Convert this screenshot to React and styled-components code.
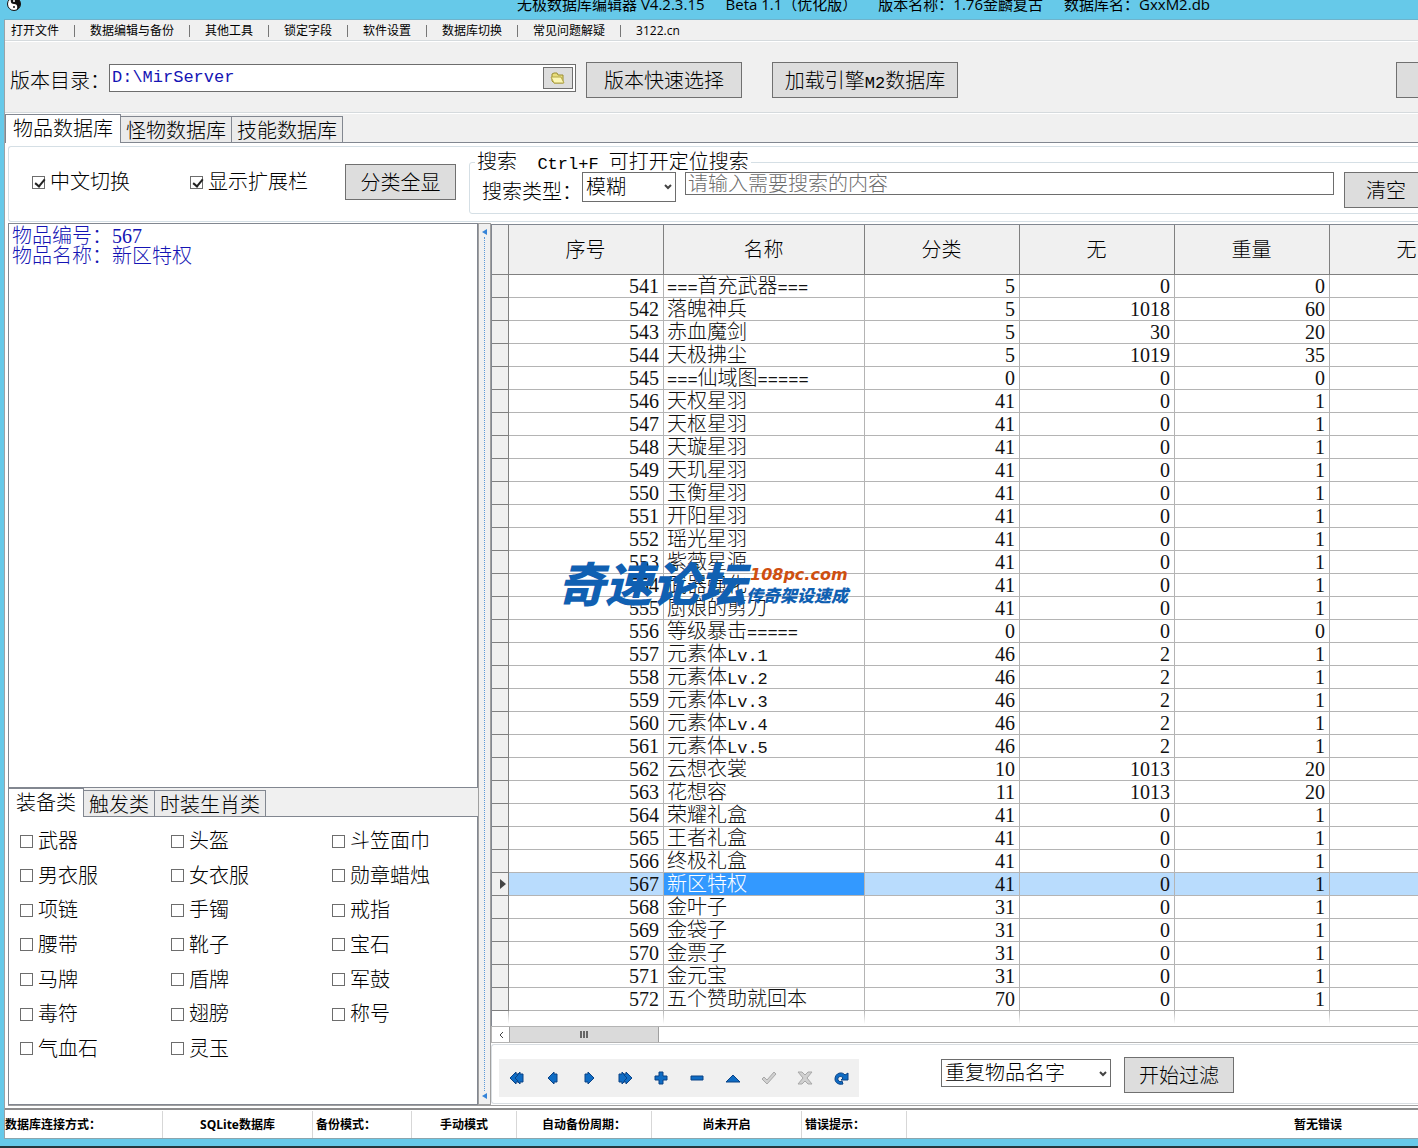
import React, { useState } from "react";
import styled, { createGlobalStyle } from "styled-components";

const GlobalStyle = createGlobalStyle`
  * {
    box-sizing: border-box;
  }

  body {
    margin: 0;
    color: #000;
    font-family: "Liberation Serif", "Noto Sans CJK SC", serif;
    font-size: 20px;
    font-weight: 300;
    line-height: 20px;
  }

  button,
  input,
  select {
    font: inherit;
    color: inherit;
    margin: 0;
  }
`;

const Window = styled.div`
  display: flex;
  flex-direction: column;
  min-height: 100vh;
  padding-left: 4px;
  overflow: hidden;
  background: #66c9e9;
  border-bottom: 2px solid #24373d;
`;

const TitleBar = styled.header`
  display: flex;
  height: 20px;
  padding-left: 3px;
  overflow: hidden;
  border-bottom: 1px solid #6fb3cb;
  font-family: "Open Sans", "Noto Sans CJK SC", sans-serif;
  font-size: 15px;
  font-weight: 400;
  line-height: 8px;
  white-space: nowrap;
  flex-shrink: 0;
`;

const Logo = styled.svg`
  width: 14px;
  height: 14px;
  margin-top: -3px;
  flex-shrink: 0;
`;

const Title = styled.div`
  display: flex;
  gap: 21px;
  margin-left: 496px;
`;

const Client = styled.div`
  display: flex;
  flex-direction: column;
  flex: 1;
  background: #f0f0f0;
  border-left: 1px solid #9aa3a7;
  margin-bottom: 7px;
`;

const MenuBar = styled.nav`
  display: flex;
  align-items: center;
  height: 22px;
  padding-left: 6px;
  border-bottom: 1px solid #fff;
  box-shadow: inset 0 -1px 0 #d5dadd;
  font-family: "Open Sans", "Noto Sans CJK SC", sans-serif;
  font-size: 12px;
  font-weight: 400;
  line-height: 20px;
`;

const MenuLink = styled.a`
  color: #000;
  text-decoration: none;
  white-space: nowrap;

  & + &::before {
    content: "";
    display: inline-block;
    width: 1px;
    height: 12px;
    margin: 0 15px;
    background: #777;
    vertical-align: middle;
  }
`;

const ToolBar = styled.section`
  display: flex;
  align-items: flex-start;
  height: 72px;
  padding: 20px 0 0 5px;
  border-bottom: 1px solid #fff;
  box-shadow: inset 0 -1px 0 #d5dadd;
  white-space: nowrap;
`;

const PathLabel = styled.label`
  padding-top: 9px;
  width: 99px;
`;

const PathBox = styled.div`
  display: flex;
  width: 467px;
  height: 28px;
  margin: 2px 10px 0 0;
  padding: 2px;
  background: #fff;
  border: 1px solid #6d6d6d;
`;

const PathInput = styled.input`
  flex: 1;
  min-width: 0;
  padding: 0;
  border: 0;
  outline: 0;
  color: #1414b4;
  font-family: "Liberation Mono", monospace;
  font-size: 17px;
`;

const Button = styled.button`
  width: ${(props) => props.$width}px;
  height: 36px;
  padding: 2px 0 0;
  border: 1px solid #707070;
  border-radius: 0;
  background: #ddd;
  white-space: nowrap;
  flex-shrink: 0;
`;

const FolderButton = styled(Button)`
  display: flex;
  align-items: center;
  justify-content: center;
  height: 22px;
  padding: 0;
`;

const LoadButton = styled(Button)`
  margin-left: 30px;
`;

const EdgeButton = styled(Button)`
  margin-left: auto;
  margin-right: -88px;
`;

const Tabs = styled.div`
  display: flex;
  align-items: flex-end;
  height: 29px;
  border-bottom: 1px solid #828790;
`;

const Tab = styled.button`
  height: ${(props) => (props.$active ? 29 : 26)}px;
  margin-bottom: ${(props) => (props.$active ? -1 : 0)}px;
  padding: 0 ${(props) => (props.$active ? 7 : 5)}px;
  border: 1px solid #828790;
  border-bottom: 0;
  background: ${(props) => (props.$active ? "#fff" : "#ebebeb")};
  white-space: nowrap;

  & + & {
    margin-left: -1px;
    padding-top: 2px;
  }
`;

const Page = styled.main`
  display: flex;
  flex-direction: column;
  flex: 1;
  padding: 3px 0 0 3px;
  background: #fff;
`;

const FilterBar = styled.section`
  display: flex;
  align-items: flex-start;
  height: 76px;
  padding: 5px 0 0 23px;
  border: 1px solid #d5dfe5;
  border-right: 0;
  border-radius: 3px 0 0 3px;
`;

const CheckLabel = styled.label`
  display: flex;
  align-items: center;
  gap: 5px;
  white-space: nowrap;
`;

const SwitchLabel = styled(CheckLabel)`
  width: ${(props) => props.$width}px;
  margin-top: 20px;
`;

const CheckBox = styled.input.attrs({ type: "checkbox" })`
  appearance: none;
  position: relative;
  width: 13px;
  height: 13px;
  border: 1px solid #6d6d6d;
  background: #fff;
  flex-shrink: 0;

  &:checked::after {
    content: "";
    position: absolute;
    left: 4px;
    top: 0;
    width: 4px;
    height: 8px;
    border: solid #222;
    border-width: 0 2px 2px 0;
    transform: rotate(40deg);
  }
`;

const ShowAllButton = styled(Button)`
  margin-top: 12px;
`;

const SearchBox = styled.fieldset`
  display: flex;
  flex: 1;
  min-width: 0;
  height: 62px;
  margin: 0 -11px 0 13px;
  padding: 0 0 0 12px;
  border: 1px solid #d5dfe5;
  border-radius: 3px;
`;

const SearchLegend = styled.legend`
  margin-left: -7px;
  padding: 0 2px;
  height: 20px;
  white-space: pre;
`;

const SearchRow = styled.div`
  display: flex;
  align-items: flex-start;
  flex: 1;
`;

const SearchLabel = styled.label`
  width: 100px;
  padding-top: 10px;
  white-space: nowrap;
`;

const SelectBox = styled.div`
  position: relative;
  width: ${(props) => props.$width}px;
  flex-shrink: 0;

  svg {
    position: absolute;
    right: 3px;
    top: 11px;
    pointer-events: none;
  }
`;

const Select = styled.select`
  appearance: none;
  width: 100%;
  height: ${(props) => props.$height}px;
  padding: 0 18px 0 3px;
  border: 1px solid #6d6d6d;
  border-radius: 0;
  background: #fff;
`;

const SearchInput = styled.input`
  flex: 1;
  min-width: 0;
  height: 23px;
  margin: 0 10px 0 9px;
  padding: 1px 2px 0;
  border: 1px solid #6d6d6d;

  &::placeholder {
    color: #6d6d6d;
    opacity: 1;
  }
`;

const Work = styled.div`
  display: flex;
  flex: 1;
  margin-top: 1px;
  border-bottom: 1px solid #a0a0a0;
`;

const Side = styled.aside`
  display: flex;
  flex-direction: column;
  width: 470px;
  background: #f0f0f0;
  flex-shrink: 0;
`;

const Memo = styled.div`
  flex: 1;
  padding: 2px 3px;
  border: 1px solid #828790;
  background: #fff;
  color: #1414b4;
`;

const KindPanel = styled.div`
  display: grid;
  grid-template-columns: 151px 161px 1fr;
  grid-template-rows: repeat(7, 1fr);
  height: 288px;
  padding: 7px 0 38px 11px;
  border: 1px solid #828790;
  border-top: 0;
  background: #fff;
`;

const Splitter = styled.div`
  display: flex;
  flex-direction: column;
  align-items: center;
  justify-content: space-between;
  width: 13px;
  padding: 5px 0;
  border: 1px solid #a0a0a0;
  background: #f0f0f0;
  color: #3584d8;
  flex-shrink: 0;
`;

const Dots = styled.div`
  flex: 1;
  width: 0;
  margin: 2px 0;
  border-left: 1px dotted #5d9ad8;
`;

const GridPane = styled.section`
  display: flex;
  flex-direction: column;
  flex: 1;
  min-width: 0;
  padding-top: 1px;
`;

const GridView = styled.div`
  position: relative;
  flex: 1;
  overflow: hidden;
  border: 1px solid #828790;
  border-width: 1px 0 0 1px;
`;

const Table = styled.table`
  width: 992px;
  table-layout: fixed;
  border-spacing: 0;
`;

const HeadCell = styled.th`
  height: 50px;
  padding: 0 1px 0 0;
  border: solid #808080;
  border-width: 0 1px 1px 0;
  background: #f0f0f0;
  font-weight: 300;
`;

const Cell = styled.td`
  height: 23px;
  padding: 0 4px 0 3px;
  border: solid #b4b4b4;
  border-width: 0 1px 1px 0;
  text-align: ${(props) => (props.$name ? "left" : "right")};
  white-space: nowrap;
  background: ${(props) =>
    props.$current ? (props.$name ? "#3399ff" : "#b9dcfd") : "#fff"};
  color: ${(props) => (props.$current && props.$name ? "#fff" : "#111")};
`;

const Marker = styled.td`
  height: 23px;
  padding: 0 2px 0 0;
  border: solid #808080;
  border-width: 0 1px 1px 0;
  background: #f0f0f0;
  text-align: right;
  line-height: 0;
`;

const TailCell = styled.td`
  height: 13px;
  padding: 0;
  background: linear-gradient(#b4b4b4, #fff) right / 1px 100% no-repeat;
`;

const Watermark = styled.div`
  position: absolute;
  left: 66px;
  top: 334px;
  display: flex;
  align-items: flex-end;
  color: #1060b2;
  font-family: "Noto Sans CJK SC", sans-serif;
  font-style: italic;
  font-weight: 900;
  font-size: 47px;
  line-height: 46px;
  white-space: nowrap;
  pointer-events: none;
`;

const WatermarkSide = styled.div`
  display: flex;
  flex-direction: column;
  font-size: 17px;
  line-height: 20px;
`;

const Site = styled.span`
  color: #cf4f10;
  font-family: "DejaVu Sans", sans-serif;
  font-size: 16px;
  padding-left: 4px;
`;

const ScrollBar = styled.div`
  display: flex;
  height: 17px;
  border: 1px solid #b4b4b4;
  border-right: 0;
  background: #fff;
`;

const ScrollButton = styled.button`
  width: 17px;
  padding: 0;
  border: 0;
  background: #fff;
  line-height: 0;
`;

const Thumb = styled.div`
  display: flex;
  align-items: center;
  justify-content: center;
  gap: 1px;
  width: 150px;
  border: solid #a0a0a0;
  border-width: 0 1px;
  background: #dadada;

  i {
    width: 2px;
    height: 7px;
    background: #666;
  }
`;

const BottomBar = styled.div`
  display: flex;
  align-items: flex-start;
  height: 60px;
  margin: 1px 0 1px;
  padding: 12px 0 0 7px;
  border: 1px solid #d9dee2;
  border-right: 0;
  border-radius: 3px 0 0 3px;
`;

const Navigator = styled.div`
  display: flex;
  margin: 2px 82px 0 0;
  background: #f0f0f0;
`;

const NavButton = styled.button`
  display: flex;
  align-items: center;
  justify-content: center;
  width: 36px;
  height: 38px;
  padding: 0;
  border: 0;
  background: none;
`;

const FilterSelect = styled(SelectBox)`
  margin: 2px 13px 0 0;
`;

const StatusBar = styled.footer`
  display: flex;
  height: 33px;
  padding-top: 2px;
  border-bottom: 1px solid #8aa5ae;
  background: #fff;
  font-family: "Open Sans", "Noto Sans CJK SC", sans-serif;
  font-size: 12px;
  font-weight: 700;
  line-height: 28px;
  white-space: nowrap;
`;

const StatusRow = styled.div`
  display: flex;
  flex: 1;
  border-top: 2px solid #8c8c8c;
`;

const StatusCell = styled.div`
  width: ${(props) => props.$width}px;
  margin-top: 1px;
  border-right: 1px solid #d7d7d7;
  text-align: ${(props) => props.$align || "center"};
`;

const StatusMessage = styled.div`
  flex: 1;
  margin-top: 1px;
  padding-right: 76px;
  text-align: right;
`;

const Mono = styled.span`
  font-family: "Liberation Mono", monospace;
  font-size: 17px;
  line-height: 0;
`;

// latin runs are set in the fixed-pitch face, half as wide as a hanzi
const Mixed = ({ text }) =>
  text
    .split(/([ -~]+)/)
    .map((part, i) => (i % 2 ? <Mono key={i}>{part}</Mono> : part));

const menus = [
  "打开文件",
  "数据编辑与备份",
  "其他工具",
  "锁定字段",
  "软件设置",
  "数据库切换",
  "常见问题解疑",
  "3122.cn",
];

const kinds = [
  "武器", "头盔", "斗笠面巾",
  "男衣服", "女衣服", "勋章蜡烛",
  "项链", "手镯", "戒指",
  "腰带", "靴子", "宝石",
  "马牌", "盾牌", "军鼓",
  "毒符", "翅膀", "称号",
  "气血石", "灵玉",
];

const columns = ["序号", "名称", "分类", "无", "重量", "无"];

const items = [
  [541, "===首充武器===", 5, 0, 0],
  [542, "落魄神兵", 5, 1018, 60],
  [543, "赤血魔剑", 5, 30, 20],
  [544, "天极拂尘", 5, 1019, 35],
  [545, "===仙域图=====", 0, 0, 0],
  [546, "天权星羽", 41, 0, 1],
  [547, "天枢星羽", 41, 0, 1],
  [548, "天璇星羽", 41, 0, 1],
  [549, "天玑星羽", 41, 0, 1],
  [550, "玉衡星羽", 41, 0, 1],
  [551, "开阳星羽", 41, 0, 1],
  [552, "瑶光星羽", 41, 0, 1],
  [553, "紫薇星源", 41, 0, 1],
  [554, "武器强化", 41, 0, 1],
  [555, "厨娘的剪刀", 41, 0, 1],
  [556, "等级暴击=====", 0, 0, 0],
  [557, "元素体Lv.1", 46, 2, 1],
  [558, "元素体Lv.2", 46, 2, 1],
  [559, "元素体Lv.3", 46, 2, 1],
  [560, "元素体Lv.4", 46, 2, 1],
  [561, "元素体Lv.5", 46, 2, 1],
  [562, "云想衣裳", 10, 1013, 20],
  [563, "花想容", 11, 1013, 20],
  [564, "荣耀礼盒", 41, 0, 1],
  [565, "王者礼盒", 41, 0, 1],
  [566, "终极礼盒", 41, 0, 1],
  [567, "新区特权", 41, 0, 1],
  [568, "金叶子", 31, 0, 1],
  [569, "金袋子", 31, 0, 1],
  [570, "金票子", 31, 0, 1],
  [571, "金元宝", 31, 0, 1],
  [572, "五个赞助就回本", 70, 0, 1],
];

const navIcons = [
  {
    label: "首条",
    d: "M5 8L11 2V4H14V12H11V14Z",
    front: "M1 8L7 2V4H9V5L6 8L9 11V12H7V14Z",
  },
  { label: "上一条", d: "M3 8L9 2V4H12V12H9V14Z" },
  { label: "下一条", d: "M13 8L7 2V4H4V12H7V14Z" },
  {
    label: "末条",
    d: "M11 8L5 2V4H2V12H5V14Z",
    front: "M15 8L9 2V4H7V5L10 8L7 11V12H9V14Z",
  },
  { label: "添加", d: "M6 2H10V6H14V10H10V14H6V10H2V6H6Z" },
  { label: "删除", d: "M2 6H14V10H2Z" },
  { label: "编辑", d: "M1 12L8 5L15 12Z" },
  { label: "保存", d: "M1 9L3 7L6 10L13 2L15 4L6 14Z", off: true },
  {
    label: "取消",
    d: "M1 2H5L8 5L11 2H15L10 8L15 14H11L8 11L5 14H1L6 8Z",
    off: true,
  },
  {
    label: "刷新",
    d: "M15 3V10H8L10 8C8 5 4 7 5 10C6 12 8 12 9 11L10 14C6 15 2 13 2 9C2 3 9 1 12 5Z",
  },
];

const Chevron = () => (
  <svg width="10" height="8" viewBox="0 0 10 8">
    <path d="M2 2L5 5L8 2" fill="none" stroke="#444" strokeWidth="2" />
  </svg>
);

const Arrow = () => (
  <svg width="5" height="6" viewBox="0 0 5 6">
    <path d="M5 0L0 3L5 6Z" fill="currentColor" />
  </svg>
);

const ItemGrid = ({ current, onSelect }) => (
  <GridView>
    <Table>
      <colgroup>
        <col style={{ width: 17 }} />
        {columns.map((name, i) => (
          <col key={i} style={{ width: i === 1 ? 201 : 155 }} />
        ))}
      </colgroup>
      <thead>
        <tr>
          <HeadCell />
          {columns.map((name, i) => (
            <HeadCell key={i}>{name}</HeadCell>
          ))}
        </tr>
      </thead>
      <tbody>
        {items.map((item) => {
          const active = item[0] === current;
          return (
            <tr key={item[0]} onClick={() => onSelect(item[0])}>
              <Marker>
                {active && (
                  <svg width="6" height="10" viewBox="0 0 6 10">
                    <path d="M0 0L6 5L0 10Z" fill="#444" />
                  </svg>
                )}
              </Marker>
              {item.map((value, i) => (
                <Cell key={i} $name={i === 1} $current={active}>
                  {i === 1 ? <Mixed text={value} /> : value}
                </Cell>
              ))}
              <Cell $current={active} />
            </tr>
          );
        })}
        <tr>
          <TailCell />
          {columns.map((name, i) => (
            <TailCell key={i} />
          ))}
        </tr>
      </tbody>
    </Table>
    <Watermark>
      奇速论坛
      <WatermarkSide>
        <Site>108pc.com</Site>
        传奇架设速成
      </WatermarkSide>
    </Watermark>
  </GridView>
);

const App = () => {
  const [current, setCurrent] = useState(567);
  const item = items.find((row) => row[0] === current);

  return (
    <Window>
      <GlobalStyle />
      <TitleBar>
        <Logo viewBox="0 0 14 14">
          <circle cx="7" cy="7" r="6.5" fill="#fff" stroke="#111" />
          <path
            d="M7 0.500A6.500 6.500 0 0 1 7 13.500A3.250 3.250 0 0 0 7 7A3.250 3.250 0 0 1 7 0.500Z"
            fill="#111"
          />
          <circle cx="7" cy="4" r="1" fill="#fff" />
          <circle cx="7" cy="10" r="1" fill="#111" />
        </Logo>
        <Title>
          <span>无极数据库编辑器 V4.2.3.15</span>
          <span>Beta 1.1（优化版）</span>
          <span>版本名称：1.76金麟复古</span>
          <span>数据库名：GxxM2.db</span>
        </Title>
      </TitleBar>

      <Client>
        <MenuBar>
          {menus.map((name) => (
            <MenuLink key={name} href="#">
              {name}
            </MenuLink>
          ))}
        </MenuBar>

        <ToolBar>
          <PathLabel htmlFor="path">版本目录：</PathLabel>
          <PathBox>
            <PathInput id="path" defaultValue="D:\MirServer" />
            <FolderButton $width={30} aria-label="浏览">
              <svg width="16" height="14" viewBox="0 0 16 14">
                <path
                  d="M2 10V3L4 2H7L8 4H13V12H4Z"
                  fill="#e8dd7c"
                  stroke="#9a8d33"
                />
                <path d="M1 6H11L14 12H4Z" fill="#fbf6b4" stroke="#b3a649" />
              </svg>
            </FolderButton>
          </PathBox>
          <Button $width={156}>版本快速选择</Button>
          <LoadButton $width={186}>
            <Mixed text="加载引擎M2数据库" />
          </LoadButton>
          <EdgeButton $width={110} aria-label="更多" />
        </ToolBar>

        <Tabs>
          <Tab $active>物品数据库</Tab>
          <Tab>怪物数据库</Tab>
          <Tab>技能数据库</Tab>
        </Tabs>

        <Page>
          <FilterBar>
            <SwitchLabel $width={158}>
              <CheckBox defaultChecked />
              中文切换
            </SwitchLabel>
            <SwitchLabel $width={155}>
              <CheckBox defaultChecked />
              显示扩展栏
            </SwitchLabel>
            <ShowAllButton $width={111}>分类全显</ShowAllButton>
            <SearchBox>
              <SearchLegend>
                <Mixed text="搜索  Ctrl+F 可打开定位搜索" />
              </SearchLegend>
              <SearchRow>
                <SearchLabel htmlFor="mode">搜索类型：</SearchLabel>
                <SelectBox $width={94}>
                  <Select id="mode" $height={30}>
                    <option>模糊</option>
                    <option>精确</option>
                  </Select>
                  <Chevron />
                </SelectBox>
                <SearchInput
                  aria-label="搜索内容"
                  placeholder="请输入需要搜索的内容"
                />
                <Button $width={84}>清空</Button>
              </SearchRow>
            </SearchBox>
          </FilterBar>

          <Work>
            <Side>
              <Memo>
                <div>物品编号：{item[0]}</div>
                <div>
                  物品名称：
                  <Mixed text={item[1]} />
                </div>
              </Memo>
              <Tabs>
                <Tab $active>装备类</Tab>
                <Tab>触发类</Tab>
                <Tab>时装生肖类</Tab>
              </Tabs>
              <KindPanel>
                {kinds.map((name) => (
                  <CheckLabel key={name}>
                    <CheckBox />
                    {name}
                  </CheckLabel>
                ))}
              </KindPanel>
            </Side>

            <Splitter>
              <Arrow />
              <Dots />
              <Arrow />
            </Splitter>

            <GridPane>
              <ItemGrid current={current} onSelect={setCurrent} />
              <ScrollBar>
                <ScrollButton aria-label="向左">
                  <svg width="6" height="8" viewBox="0 0 6 8">
                    <path d="M5 1L2 4L5 7" fill="none" stroke="#444" />
                  </svg>
                </ScrollButton>
                <Thumb>
                  <i />
                  <i />
                  <i />
                </Thumb>
              </ScrollBar>
              <BottomBar>
                <Navigator>
                  {navIcons.map(({ label, d, front, off }) => (
                    <NavButton key={label} aria-label={label} disabled={off}>
                      <svg
                        width="16"
                        height="16"
                        viewBox="0 0 16 16"
                        fill={off ? "#d0d0d0" : "#0f6cc4"}
                        stroke={off ? "#a8a8a8" : "#0a4285"}
                      >
                        <path d={d} />
                        {front && <path d={front} />}
                      </svg>
                    </NavButton>
                  ))}
                </Navigator>
                <FilterSelect $width={170}>
                  <Select $height={28} aria-label="过滤方式">
                    <option>重复物品名字</option>
                  </Select>
                  <Chevron />
                </FilterSelect>
                <Button $width={110}>开始过滤</Button>
              </BottomBar>
            </GridPane>
          </Work>
        </Page>

        <StatusBar>
          <StatusRow>
            <StatusCell $width={158} $align="left">
              数据库连接方式：
            </StatusCell>
            <StatusCell $width={150}>SQLite数据库</StatusCell>
            <StatusCell $width={99} $align="left">
              &nbsp;备份模式：
            </StatusCell>
            <StatusCell $width={105}>手动模式</StatusCell>
            <StatusCell $width={135}>自动备份周期：</StatusCell>
            <StatusCell $width={150}>尚未开启</StatusCell>
            <StatusCell $width={105} $align="left">
              &nbsp;错误提示：
            </StatusCell>
            <StatusMessage>暂无错误</StatusMessage>
          </StatusRow>
        </StatusBar>
      </Client>
    </Window>
  );
};

export default App;
